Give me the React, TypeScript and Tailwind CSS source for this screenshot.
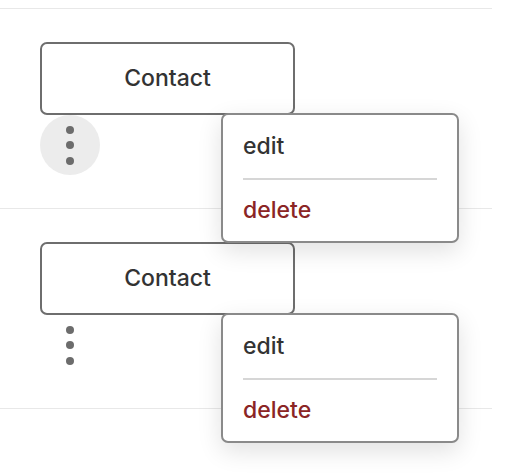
const font = { fontFamily: 'Inter, "Noto Sans", sans-serif' };

type RowProps = { highlighted?: boolean };

function Row({ highlighted }: RowProps) {
  return (
    <div className="relative h-[200px] border-t border-[#e8e8e8] pl-10 pt-[33px]">
      <button className="flex h-[73px] w-[255px] items-center justify-center rounded-[7px] border-2 border-[#6e6e6e] bg-white text-[23px] font-medium text-[#333]">
        Contact
      </button>

      <div
        className={
          highlighted
            ? 'flex h-[60px] w-[60px] flex-col items-center justify-center gap-[7.5px] rounded-full bg-[#ececec]'
            : 'flex h-[60px] w-[60px] flex-col items-center justify-center gap-[7.5px] rounded-full'
        }
      >
        <span className="h-2 w-2 rounded-full bg-[#6c6c6c]" />
        <span className="h-2 w-2 rounded-full bg-[#6c6c6c]" />
        <span className="h-2 w-2 rounded-full bg-[#6c6c6c]" />
      </div>

      <div className="absolute left-[221px] top-[104px] z-10 w-[238px] rounded-[7px] border-2 border-[#8a8a8a] bg-white px-5 shadow-[0_8px_24px_rgba(0,0,0,0.12)]">
        <div className="flex h-[63px] items-center text-[23px] font-medium text-[#333]">edit</div>
        <div className="h-[2px] bg-[#d6d6d6]" />
        <div className="flex h-[61px] items-center text-[23px] font-medium text-[#8b2525]">delete</div>
      </div>
    </div>
  );
}

export default function App() {
  return (
    <div className="h-[474px] w-[516px] bg-white pt-2" style={font}>
      <div className="w-[492px] border-b border-[#e8e8e8]">
        <Row highlighted />
        <Row />
      </div>
    </div>
  );
}
